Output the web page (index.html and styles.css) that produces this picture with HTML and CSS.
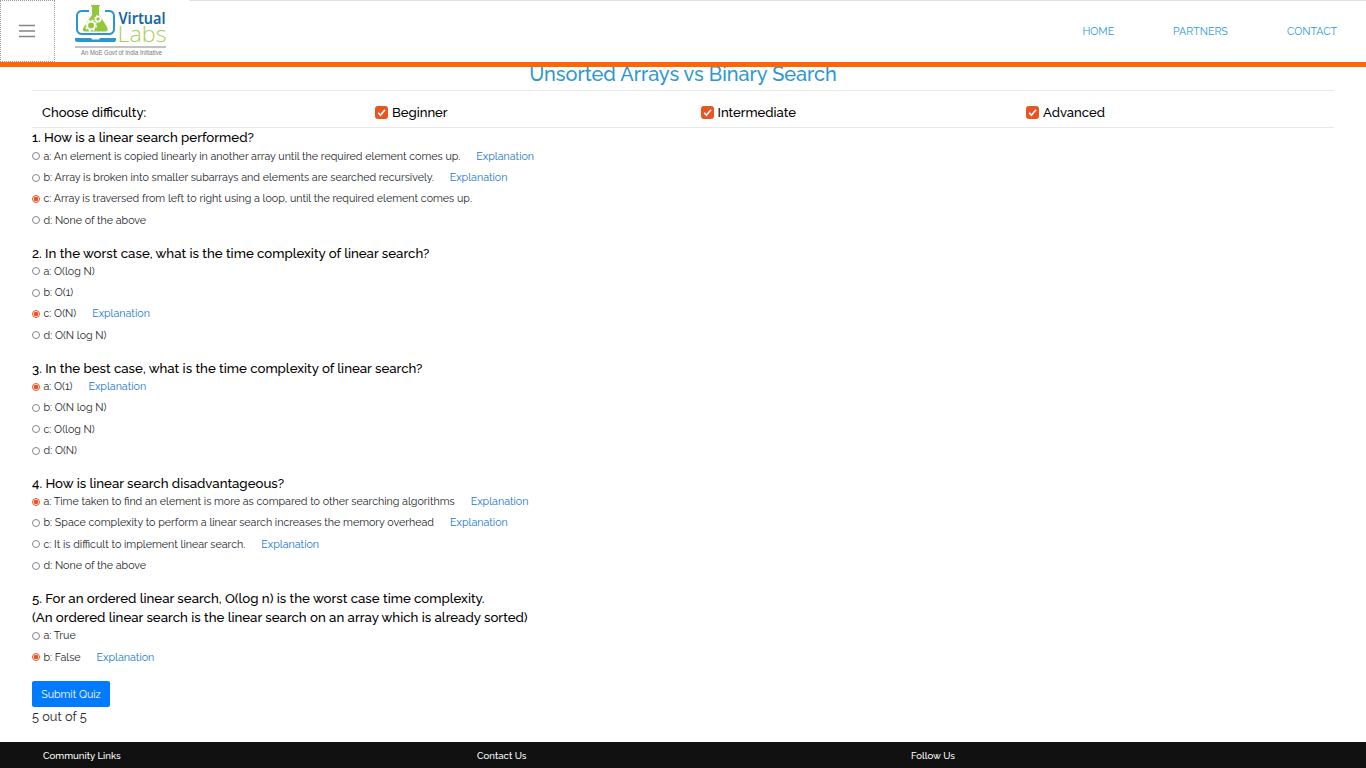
FILE: index.html
```html
<!DOCTYPE html>
<html lang="en">
<head>
<meta charset="utf-8">
<title>Unsorted Arrays vs Binary Search</title>
<link rel="stylesheet" href="styles.css">
</head>
<body>
<header class="header">
  <button class="menu" aria-label="Menu"><svg width="16" height="14" viewBox="0 0 16 14"><path d="M0 1.500h16M0 7h16M0 12.500h16" stroke="#858585" stroke-width="1.500"/></svg></button>
  <a class="logo"><svg width="94" height="60" viewBox="0 0 94 60">
    <path d="M15 11H8q-4 0-5 4v15q1 4 5 4h27q4 0 5-4V15q-1-4-5-4h-4" fill="none" stroke="#2b97cc" stroke-width="2"/>
    <path d="M1 38h16l1 1.500h7l1-1.500h16v1.500q0 2.500-2 2.500H3q-2 0-2-2.500z" fill="#2b97cc"/>
    <path d="M17 5h9v1.600h-1V14l8 13q2 4.500-2 4.500H11q-3.500 0-1.500-4L18 15V6.600h-1z" fill="#93c83d"/>
    <circle cx="17" cy="25.500" r="3.900" fill="none" stroke="#fff" stroke-width="1.900"/>
    <circle cx="17" cy="25.500" r="5.300" fill="none" stroke="#fff" stroke-width="1.300" stroke-dasharray="2.080"/>
    <circle cx="24" cy="19" r="2.400" fill="none" stroke="#fff" stroke-width="1.500"/>
    <circle cx="24" cy="19" r="3.500" fill="none" stroke="#fff" stroke-width="1" stroke-dasharray="1.400"/>
    <text class="logo-virtual" x="44.500" y="23.500" textLength="47" lengthAdjust="spacingAndGlyphs">Virtual</text>
    <text class="logo-labs" x="43.500" y="42" textLength="49" lengthAdjust="spacingAndGlyphs">Labs</text>
    <path d="M1 47h91" stroke="#c3c3c3" stroke-width="2"/>
    <text class="logo-tag" x="7" y="54.500" textLength="81" lengthAdjust="spacingAndGlyphs">An MoE Govt of India Initiative</text>
  </svg></a>
  <nav class="nav"><a class="nav-home">HOME</a><a class="nav-partners">PARTNERS</a><a class="nav-contact">CONTACT</a></nav>
</header>
<main class="main">
  <h1 class="title">Unsorted Arrays vs Binary Search</h1>
  <div class="difficulty">
    <span class="choose">Choose difficulty:</span>
    <label class="level"><svg class="check" viewBox="0 0 13 13"><rect x=".5" y=".5" width="12" height="12" rx="2"/><path d="M3.200 6.800l2.200 2.400L10 3.800"/></svg>Beginner</label>
    <label class="level"><svg class="check" viewBox="0 0 13 13"><rect x=".5" y=".5" width="12" height="12" rx="2"/><path d="M3.200 6.800l2.200 2.400L10 3.800"/></svg>Intermediate</label>
    <label class="level"><svg class="check" viewBox="0 0 13 13"><rect x=".5" y=".5" width="12" height="12" rx="2"/><path d="M3.200 6.800l2.200 2.400L10 3.800"/></svg>Advanced</label>
  </div>
  <section class="block">
    <div class="question">1. How is a linear search performed?</div>
    <div class="answer"><i class="radio"></i><span>a: An element is copied linearly in another array until the required element comes up.</span><a>Explanation</a></div>
    <div class="answer"><i class="radio"></i><span>b: Array is broken into smaller subarrays and elements are searched recursively.</span><a>Explanation</a></div>
    <div class="answer"><i class="radio on"></i><span>c: Array is traversed from left to right using a loop, until the required element comes up.</span></div>
    <div class="answer"><i class="radio"></i><span>d: None of the above</span></div>
  </section>
  <section class="block">
    <div class="question">2. In the worst case, what is the time complexity of linear search?</div>
    <div class="answer"><i class="radio"></i><span>a: O(log N)</span></div>
    <div class="answer"><i class="radio"></i><span>b: O(1)</span></div>
    <div class="answer"><i class="radio on"></i><span>c: O(N)</span><a>Explanation</a></div>
    <div class="answer"><i class="radio"></i><span>d: O(N log N)</span></div>
  </section>
  <section class="block">
    <div class="question">3. In the best case, what is the time complexity of linear search?</div>
    <div class="answer"><i class="radio on"></i><span>a: O(1)</span><a>Explanation</a></div>
    <div class="answer"><i class="radio"></i><span>b: O(N log N)</span></div>
    <div class="answer"><i class="radio"></i><span>c: O(log N)</span></div>
    <div class="answer"><i class="radio"></i><span>d: O(N)</span></div>
  </section>
  <section class="block">
    <div class="question">4. How is linear search disadvantageous?</div>
    <div class="answer"><i class="radio on"></i><span>a: Time taken to find an element is more as compared to other searching algorithms</span><a>Explanation</a></div>
    <div class="answer"><i class="radio"></i><span>b: Space complexity to perform a linear search increases the memory overhead</span><a>Explanation</a></div>
    <div class="answer"><i class="radio"></i><span>c: It is difficult to implement linear search.</span><a>Explanation</a></div>
    <div class="answer"><i class="radio"></i><span>d: None of the above</span></div>
  </section>
  <section class="block">
    <div class="question">5. For an ordered linear search, O(log n) is the worst case time complexity.<br>(An ordered linear search is the linear search on an array which is already sorted)</div>
    <div class="answer"><i class="radio"></i><span>a: True</span></div>
    <div class="answer"><i class="radio on"></i><span>b: False</span><a>Explanation</a></div>
  </section>
  <button class="submit">Submit Quiz</button>
  <div class="result">5 out of 5</div>
</main>
<footer class="footer"><span>Community Links</span><span>Contact Us</span><span>Follow Us</span></footer>
</body>
</html>
```
FILE: styles.css
```css
* { box-sizing: border-box; }
body { margin: 0; height: 768px; display: flex; flex-direction: column; overflow: hidden; background: #fff; color: #212529; font-family: Raleway, Lato, sans-serif; }
.header { height: 67px; flex: none; display: flex; border-bottom: 5px solid #f60; background: linear-gradient(#dee2e6, #dee2e6) 189px 0 / 1177px 1px no-repeat; }
.menu { width: 55px; height: 62px; padding: 0 2px 0 0; background: #fff; border: 1px dotted #999; display: flex; align-items: center; justify-content: center; }
.logo { margin-left: 19px; height: 62px; }
.logo svg { display: block; }
.logo-virtual { font: 600 15.500px "Noto Sans", sans-serif; fill: #12689f; }
.logo-labs { font: 300 22px "Open Sans", sans-serif; fill: #a6cf5b; }
.logo-tag { font: 6.500px "Liberation Sans", sans-serif; fill: #777; }
.nav { margin-left: auto; width: 283.500px; display: flex; font-size: 10.667px; line-height: 62px; color: #2c98d1; }
.nav-home { width: 90.500px; }
.nav-partners { width: 114px; }
.main { height: 675px; flex: none; padding: 0 32px; display: flex; flex-direction: column; align-items: flex-start; }
.title { margin: -6px 0 0; width: 100%; height: 30px; line-height: 26px; text-align: center; font-size: 19.920px; font-weight: 500; color: #2c98d1; clip-path: inset(6px 0 0); border-bottom: 1px solid #e9e9e9; }
.difficulty { width: 100%; height: 37px; padding: 6px 0 0 10px; border-bottom: 1px solid #e9e9e9; display: flex; align-items: center; font-size: 13.080px; font-weight: 500; color: #000; }
.choose { width: 333px; flex: none; }
.level { width: 325.500px; flex: none; display: flex; align-items: center; gap: 4px; }
.check { width: 13px; height: 13px; }
.check rect { fill: #e95420; stroke: #e95420; }
.check path { fill: none; stroke: #fff; stroke-width: 1.700; }
.block { margin-bottom: 10.667px; }
.question { padding-top: .4px; margin-bottom: -.4px; font-size: 13.240px; font-weight: 500; line-height: 19.200px; color: #000; white-space: nowrap; }
.answer { height: 21.333px; display: flex; align-items: flex-start; font-size: 10.700px; line-height: 17.200px; white-space: nowrap; color: #212529; }
.answer span, .answer a { margin-top: .35px; }
.answer a { margin-left: 16px; color: #1976d2; }
.radio { width: 8px; height: 8px; margin: 5px 3.500px 0 0; border: 1px solid #85848f; border-radius: 50%; flex: none; }
.radio.on { border-color: #e95420; background: radial-gradient(circle, #e95420 0 2px, #fff 2.600px); }
.submit { height: 26px; width: 78px; margin-top: .6px; padding: 0; border: 0; border-radius: 2px; background: #007bff; color: #fff; font: 10.667px Raleway, Lato, sans-serif; }
.result { font-size: 12.8px; line-height: 19.200px; }
.footer { height: 26px; flex: none; background: #111; color: #fff; padding: 0 43px; display: flex; font-size: 9.600px; font-weight: 500; line-height: 27px; }
.footer span { width: 434px; flex: none; }
```
